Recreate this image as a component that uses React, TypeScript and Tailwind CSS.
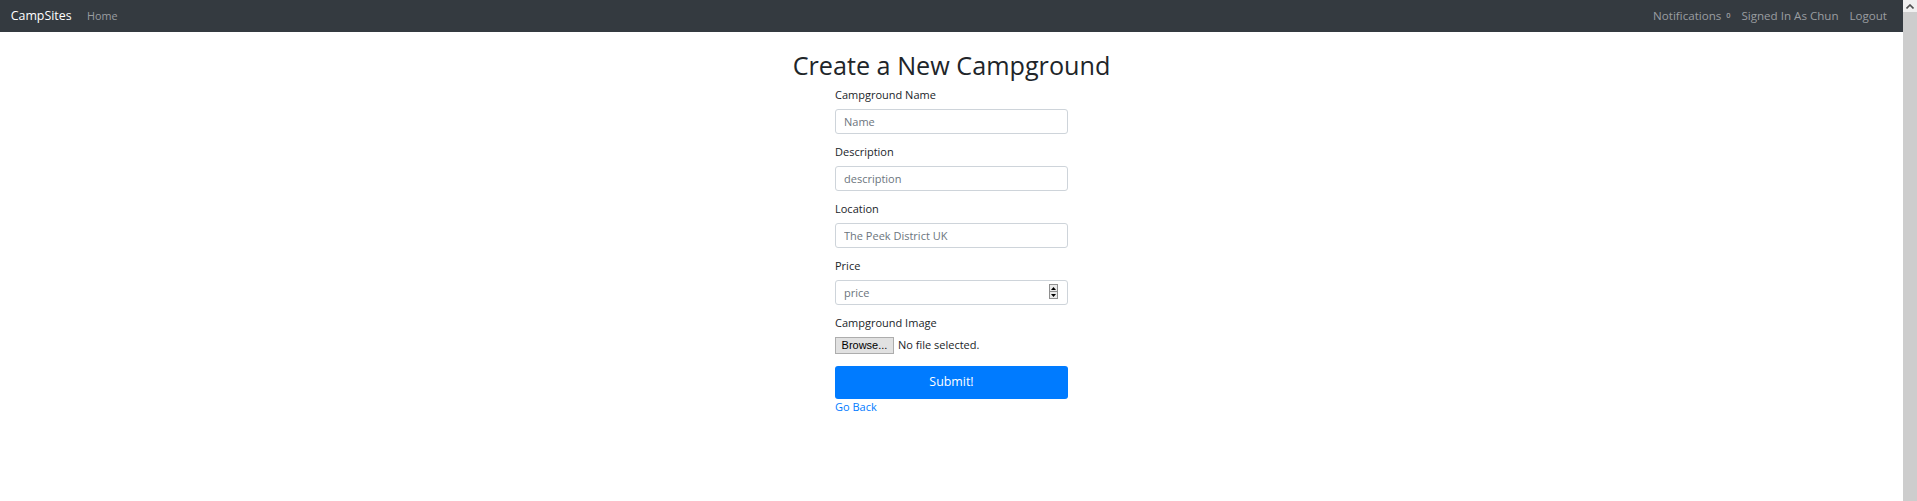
import React from "react";

const font = { fontFamily: '"Open Sans", "Noto Sans", Arial, sans-serif' };

function Field({ label, placeholder, spinner }: { label: string; placeholder: string; spinner?: boolean }) {
  return (
    <div className="mb-[10px]">
      <label className="mb-[5.5px] block text-[11px] leading-[16.5px] text-[#212529]">{label}</label>
      <div className="relative">
        <input
          type="text"
          placeholder={placeholder}
          className="block h-[25px] w-full rounded-[3px] border border-[#ced4da] bg-white px-[8px] text-[11px] text-[#495057] placeholder:text-[#6c757d] outline-none"
        />
        {spinner && (
          <div className="absolute right-[10px] top-[4px] flex h-[15px] w-[9px] flex-col border border-[#8f8f8f] bg-[#eaeaea]">
            <div className="flex flex-1 items-center justify-center border-b border-[#8f8f8f]">
              <svg width="5" height="3" viewBox="0 0 5 3"><path d="M0 3 L2.5 0 L5 3 Z" fill="#000" /></svg>
            </div>
            <div className="flex flex-1 items-center justify-center">
              <svg width="5" height="3" viewBox="0 0 5 3"><path d="M0 0 L2.5 3 L5 0 Z" fill="#000" /></svg>
            </div>
          </div>
        )}
      </div>
    </div>
  );
}

export default function App() {
  return (
    <div className="flex min-h-[501px] w-full bg-white" style={font}>
      <div className="flex-1">
        <nav className="flex h-[32px] items-center justify-between bg-[#343a40] px-[10.7px]">
          <div className="flex items-center">
            <span className="mr-[10px] text-[12.4px] text-white">CampSites</span>
            <a className="px-[5.4px] text-[10.8px] text-[#9a9da0]">Home</a>
          </div>
          <div className="flex items-center text-[11.6px] text-[#9a9da0]">
            <a className="flex items-center px-[5.4px]">
              Notifications
              <span className="ml-[5px] text-[7.5px] font-semibold">0</span>
            </a>
            <a className="px-[5.4px]">Signed In As Chun</a>
            <a className="px-[5.4px]">Logout</a>
          </div>
        </nav>

        <div className="flex flex-col items-center">
          <h1 className="mt-[18px] mb-[7px] text-[25.2px] leading-[30px] text-[#212529]">Create a New Campground</h1>
          <form className="w-[233px]">
            <Field label="Campground Name" placeholder="Name" />
            <Field label="Description" placeholder="description" />
            <Field label="Location" placeholder="The Peek District UK" />
            <Field label="Price" placeholder="price" spinner />
            <div className="mb-[11.5px]">
              <label className="mb-[4.5px] block text-[11px] leading-[16.5px] text-[#212529]">Campground Image</label>
              <div className="flex h-[18px] items-center">
                <button
                  type="button"
                  className="h-[17px] w-[59px] border border-[#adadad] bg-[#e1e1e1] text-[11px] leading-[15px] text-black"
                  style={{ fontFamily: '"Liberation Sans", Arial, sans-serif' }}
                >
                  Browse...
                </button>
                <span className="ml-[4px] text-[11px] text-[#212529]">No file selected.</span>
              </div>
            </div>
            <button
              type="button"
              className="block h-[33px] w-full rounded-[3px] bg-[#007bff] text-[12.4px] text-white"
            >
              Submit!
            </button>
            <a className="block text-[11px] leading-[16px] text-[#007bff]">Go Back</a>
          </form>
        </div>
      </div>
      <div className="flex w-[14px] flex-col bg-[#cdcdcd]">
        <div className="flex h-[12px] items-center justify-center bg-[#f0f0f0]">
          <svg width="8" height="5" viewBox="0 0 8 5">
            <path d="M0.5 4.5 L4 1 L7.5 4.5" fill="none" stroke="#505050" strokeWidth="1.6" />
          </svg>
        </div>
      </div>
    </div>
  );
}
